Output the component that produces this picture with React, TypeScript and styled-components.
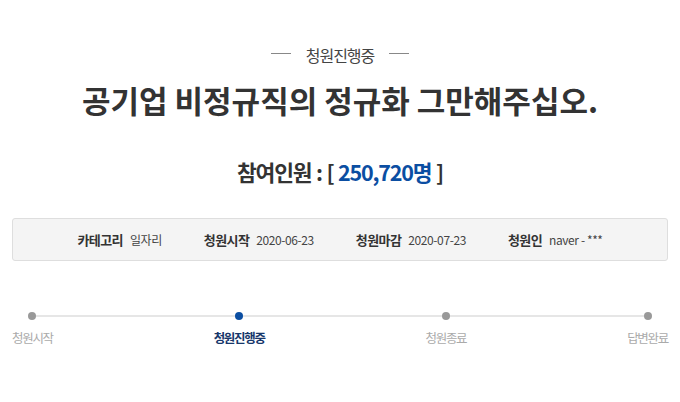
import React from 'react';
import styled, { createGlobalStyle } from 'styled-components';

const GlobalStyle = createGlobalStyle`
  html, body {
    margin: 0;
    padding: 0;
    background: #fff;
  }
  body {
    font-family: 'Noto Sans CJK KR', 'Noto Sans', sans-serif;
    color: #333;
  }
`;

const Page = styled.div`
  width: 680px;
  height: 402px;
  padding: 45px 12px 0;
  box-sizing: border-box;
  overflow: hidden;
`;

const Status = styled.div`
  display: flex;
  align-items: center;
  justify-content: center;
  gap: 15px;
  height: 20px;
  font-size: 16px;
  line-height: 20px;
  letter-spacing: -1px;
  color: #444;

  &::before,
  &::after {
    content: '';
    width: 20px;
    height: 1px;
    margin-top: -4px;
    background: #888;
  }
`;

const Title = styled.h1`
  margin: 15px 0 0;
  font-size: 31px;
  line-height: 40px;
  font-weight: 700;
  text-align: center;
  color: #333;
`;

const Count = styled.p`
  margin: 37px 0 0;
  font-size: 21.5px;
  line-height: 30px;
  font-weight: 700;
  letter-spacing: -1.2px;
  word-spacing: 1px;
  text-align: center;
  color: #333;
`;

const Number = styled.span`
  color: #0b4ea2;
`;

const InfoBox = styled.div`
  margin-top: 31px;
  height: 43px;
  box-sizing: border-box;
  display: flex;
  align-items: center;
  justify-content: center;
  gap: 42px;
  background: #f4f4f4;
  border: 1px solid #dedede;
  border-radius: 3px;
`;

const InfoItem = styled.div`
  display: flex;
  align-items: center;
  gap: 7px;
  line-height: 16px;
`;

const InfoLabel = styled.strong`
  font-size: 13px;
  font-weight: 700;
  letter-spacing: -0.6px;
  color: #333;
`;

const InfoValue = styled.span`
  font-size: 12px;
  letter-spacing: -0.4px;
  color: #444;
`;

const Steps = styled.ol`
  position: relative;
  display: flex;
  justify-content: space-between;
  margin: 51px 0 0;
  padding: 0;
  list-style: none;

  &::before {
    content: '';
    position: absolute;
    top: 3px;
    left: 20px;
    right: 22px;
    height: 2px;
    background: #e6e6e6;
  }
`;

const Step = styled.li<{ $active?: boolean }>`
  position: relative;
  display: flex;
  flex-direction: column;
  align-items: center;
  gap: 9px;
  font-size: 12.5px;
  line-height: 18px;
  letter-spacing: -1.3px;
  font-weight: ${(p) => (p.$active ? 700 : 400)};
  color: ${(p) => (p.$active ? '#17376b' : '#aaa')};
`;

const Dot = styled.span<{ $active?: boolean }>`
  width: 8px;
  height: 8px;
  border-radius: 50%;
  background: ${(p) => (p.$active ? '#0b4ea2' : '#999')};
`;

const info = [
  { label: '카테고리', value: '일자리' },
  { label: '청원시작', value: '2020-06-23' },
  { label: '청원마감', value: '2020-07-23' },
  { label: '청원인', value: 'naver - ***' },
];

const steps = [
  { name: '청원시작' },
  { name: '청원진행중', active: true },
  { name: '청원종료' },
  { name: '답변완료' },
];

const App = () => (
  <>
    <GlobalStyle />
    <Page>
      <Status>청원진행중</Status>
      <Title>공기업 비정규직의 정규화 그만해주십오.</Title>
      <Count>
        참여인원 : [ <Number>250,720명</Number> ]
      </Count>
      <InfoBox>
        {info.map((item) => (
          <InfoItem key={item.label}>
            <InfoLabel>{item.label}</InfoLabel>
            <InfoValue>{item.value}</InfoValue>
          </InfoItem>
        ))}
      </InfoBox>
      <Steps>
        {steps.map((s) => (
          <Step key={s.name} $active={s.active}>
            <Dot $active={s.active} />
            {s.name}
          </Step>
        ))}
      </Steps>
    </Page>
  </>
);

export default App;
